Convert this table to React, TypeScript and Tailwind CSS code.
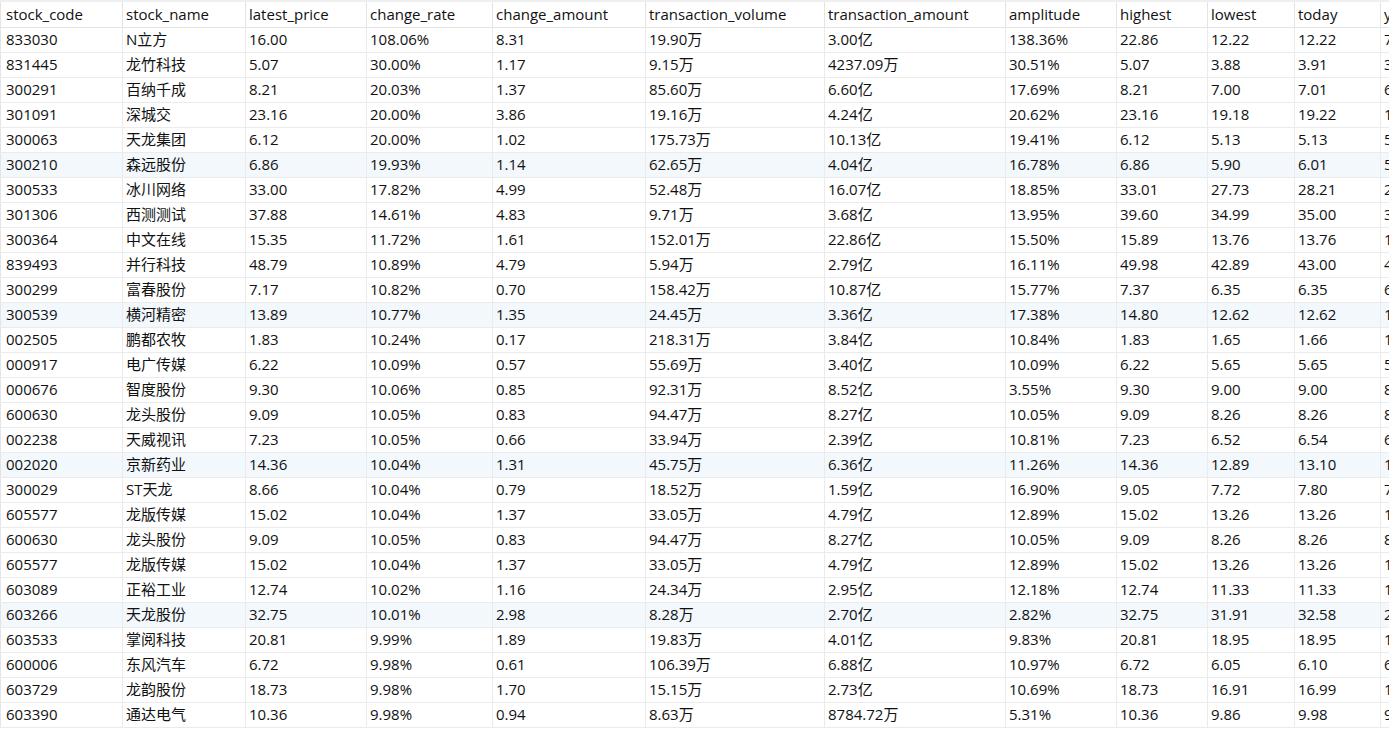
const columns = [
  { key: "stock_code", width: 122 },
  { key: "stock_name", width: 123 },
  { key: "latest_price", width: 121 },
  { key: "change_rate", width: 126 },
  { key: "change_amount", width: 153 },
  { key: "transaction_volume", width: 179 },
  { key: "transaction_amount", width: 181 },
  { key: "amplitude", width: 111 },
  { key: "highest", width: 91 },
  { key: "lowest", width: 87 },
  { key: "today", width: 86 },
  { key: "yesterday", width: 100 },
]

const rows: string[][] = [
  ["833030", "N立方", "16.00", "108.06%", "8.31", "19.90万", "3.00亿", "138.36%", "22.86", "12.22", "12.22", "7.69"],
  ["831445", "龙竹科技", "5.07", "30.00%", "1.17", "9.15万", "4237.09万", "30.51%", "5.07", "3.88", "3.91", "3.90"],
  ["300291", "百纳千成", "8.21", "20.03%", "1.37", "85.60万", "6.60亿", "17.69%", "8.21", "7.00", "7.01", "6.84"],
  ["301091", "深城交", "23.16", "20.00%", "3.86", "19.16万", "4.24亿", "20.62%", "23.16", "19.18", "19.22", "19.30"],
  ["300063", "天龙集团", "6.12", "20.00%", "1.02", "175.73万", "10.13亿", "19.41%", "6.12", "5.13", "5.13", "5.10"],
  ["300210", "森远股份", "6.86", "19.93%", "1.14", "62.65万", "4.04亿", "16.78%", "6.86", "5.90", "6.01", "5.72"],
  ["300533", "冰川网络", "33.00", "17.82%", "4.99", "52.48万", "16.07亿", "18.85%", "33.01", "27.73", "28.21", "28.01"],
  ["301306", "西测测试", "37.88", "14.61%", "4.83", "9.71万", "3.68亿", "13.95%", "39.60", "34.99", "35.00", "33.05"],
  ["300364", "中文在线", "15.35", "11.72%", "1.61", "152.01万", "22.86亿", "15.50%", "15.89", "13.76", "13.76", "13.74"],
  ["839493", "并行科技", "48.79", "10.89%", "4.79", "5.94万", "2.79亿", "16.11%", "49.98", "42.89", "43.00", "44.00"],
  ["300299", "富春股份", "7.17", "10.82%", "0.70", "158.42万", "10.87亿", "15.77%", "7.37", "6.35", "6.35", "6.47"],
  ["300539", "横河精密", "13.89", "10.77%", "1.35", "24.45万", "3.36亿", "17.38%", "14.80", "12.62", "12.62", "12.54"],
  ["002505", "鹏都农牧", "1.83", "10.24%", "0.17", "218.31万", "3.84亿", "10.84%", "1.83", "1.65", "1.66", "1.66"],
  ["000917", "电广传媒", "6.22", "10.09%", "0.57", "55.69万", "3.40亿", "10.09%", "6.22", "5.65", "5.65", "5.65"],
  ["000676", "智度股份", "9.30", "10.06%", "0.85", "92.31万", "8.52亿", "3.55%", "9.30", "9.00", "9.00", "8.45"],
  ["600630", "龙头股份", "9.09", "10.05%", "0.83", "94.47万", "8.27亿", "10.05%", "9.09", "8.26", "8.26", "8.26"],
  ["002238", "天威视讯", "7.23", "10.05%", "0.66", "33.94万", "2.39亿", "10.81%", "7.23", "6.52", "6.54", "6.57"],
  ["002020", "京新药业", "14.36", "10.04%", "1.31", "45.75万", "6.36亿", "11.26%", "14.36", "12.89", "13.10", "13.05"],
  ["300029", "ST天龙", "8.66", "10.04%", "0.79", "18.52万", "1.59亿", "16.90%", "9.05", "7.72", "7.80", "7.87"],
  ["605577", "龙版传媒", "15.02", "10.04%", "1.37", "33.05万", "4.79亿", "12.89%", "15.02", "13.26", "13.26", "13.65"],
  ["600630", "龙头股份", "9.09", "10.05%", "0.83", "94.47万", "8.27亿", "10.05%", "9.09", "8.26", "8.26", "8.26"],
  ["605577", "龙版传媒", "15.02", "10.04%", "1.37", "33.05万", "4.79亿", "12.89%", "15.02", "13.26", "13.26", "13.65"],
  ["603089", "正裕工业", "12.74", "10.02%", "1.16", "24.34万", "2.95亿", "12.18%", "12.74", "11.33", "11.33", "11.58"],
  ["603266", "天龙股份", "32.75", "10.01%", "2.98", "8.28万", "2.70亿", "2.82%", "32.75", "31.91", "32.58", "29.77"],
  ["603533", "掌阅科技", "20.81", "9.99%", "1.89", "19.83万", "4.01亿", "9.83%", "20.81", "18.95", "18.95", "18.92"],
  ["600006", "东风汽车", "6.72", "9.98%", "0.61", "106.39万", "6.88亿", "10.97%", "6.72", "6.05", "6.10", "6.11"],
  ["603729", "龙韵股份", "18.73", "9.98%", "1.70", "15.15万", "2.73亿", "10.69%", "18.73", "16.91", "16.99", "17.03"],
  ["603390", "通达电气", "10.36", "9.98%", "0.94", "8.63万", "8784.72万", "5.31%", "10.36", "9.86", "9.98", "9.42"],
]

// every sixth row carries the light blue tint
const tinted = new Set([5, 11, 17, 23])

export default function App() {
  return (
    <div className="w-[1389px] h-[749px] overflow-hidden bg-white text-[15px] text-[#111] font-['Open_Sans','Noto_Sans_CJK_SC',sans-serif]">
      <table className="table-fixed border-collapse border-t-2 border-t-[#efefef]" style={{ width: 1480 }}>
        <colgroup>
          {columns.map((c) => (
            <col key={c.key} style={{ width: c.width }} />
          ))}
        </colgroup>
        <thead>
          <tr className="h-[26px]">
            {columns.map((c, i) => (
              <th
                key={c.key}
                className={`font-normal text-left whitespace-nowrap overflow-hidden leading-none border-r border-b border-[#e4e4e4] ${i === 0 ? "pl-[5px] border-l border-l-[#e4e4e4]" : "pl-[3px]"}`}
              >
                {c.key === "yesterday" ? "yesterday_close" : c.key}
              </th>
            ))}
          </tr>
        </thead>
        <tbody>
          {rows.map((r, ri) => (
            <tr key={ri} className={`h-[25px] ${tinted.has(ri) ? "bg-[#f3f8fd]" : "bg-white"}`}>
              {r.map((v, ci) => (
                <td
                  key={ci}
                  className={`whitespace-nowrap overflow-hidden leading-none border-r border-b border-[#ebebeb] ${ci === 0 ? "pl-[5px] border-l border-l-[#e4e4e4]" : "pl-[3px]"}`}
                >
                  {v}
                </td>
              ))}
            </tr>
          ))}
        </tbody>
      </table>
    </div>
  )
}
